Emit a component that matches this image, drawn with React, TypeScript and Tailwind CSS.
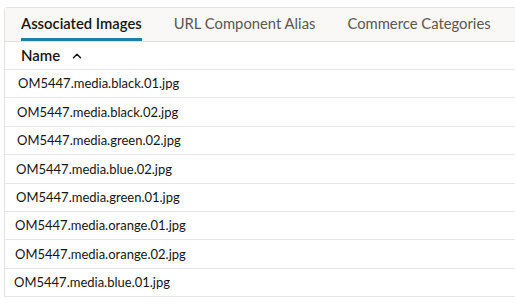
import { ChevronUp } from 'lucide-react'

const rows = [
  { name: 'OM5447.media.black.01.jpg', pad: 'pl-[13px]' },
  { name: 'OM5447.media.black.02.jpg', pad: 'pl-[12px]' },
  { name: 'OM5447.media.green.02.jpg', pad: 'pl-[12px]' },
  { name: 'OM5447.media.blue.02.jpg', pad: 'pl-[11px]' },
  { name: 'OM5447.media.green.01.jpg', pad: 'pl-[11px]' },
  { name: 'OM5447.media.orange.01.jpg', pad: 'pl-[10px]' },
  { name: 'OM5447.media.orange.02.jpg', pad: 'pl-[10px]' },
  { name: 'OM5447.media.blue.01.jpg', pad: 'pl-[9px]' },
]

const tabs = ['Associated Images', 'URL Component Alias', 'Commerce Categories']

export default function App() {
  return (
    <div className="w-[515px] h-[306px] bg-white overflow-hidden font-['Lato','Noto_Sans',sans-serif] text-[#161513]">
      <div className="ml-[4px] mt-[7px] w-[530px] border-l border-t border-[#e4e2de] rounded-tl-[4px]">
        <div className="flex h-[34px] bg-[#f9f8f6] border-b border-[#e0dedb]">
          {tabs.map((t, i) => (
            <div
              key={t}
              className={
                i === 0
                  ? 'relative px-[16px] pt-[4px] text-[14.8px] font-semibold text-[#161513]'
                  : 'relative px-[16px] pt-[4px] text-[14.8px] text-[#5a5651]'
              }
            >
              {t}
              {i === 0 && <span className="absolute left-[16px] right-[16px] bottom-0 h-[3px] bg-[#227e9e]" />}
            </div>
          ))}
        </div>
        <div className="flex items-center h-[28px] border-b border-[#e6e6e6] pl-[16px] text-[15px] font-semibold">
          Name
          <ChevronUp className="ml-[10px] w-[14px] h-[14px]" strokeWidth={2.5} />
        </div>
        {rows.map((r) => (
          <div
            key={r.name}
            className={`flex items-center pt-px h-[28.4px] border-b border-[#e6e6e6] text-[13px] ${r.pad}`}
          >
            {r.name}
          </div>
        ))}
      </div>
    </div>
  )
}
